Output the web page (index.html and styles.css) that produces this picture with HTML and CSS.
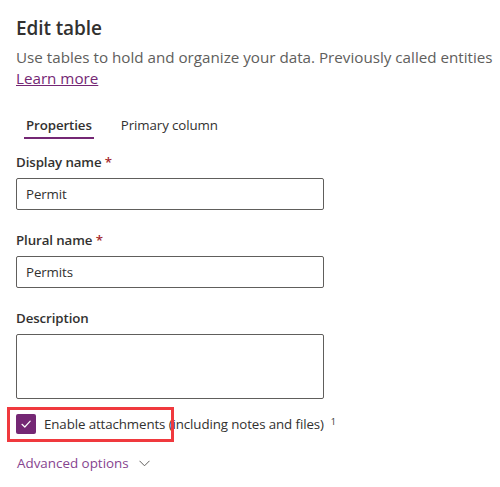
FILE: index.html
```html
<!DOCTYPE html>
<html>
<head>
<meta charset="utf-8">
<link rel="stylesheet" href="styles.css">
</head>
<body>
<div class="panel">
  <h1 class="title">Edit table</h1>
  <p class="subtitle">Use tables to hold and organize your data. Previously called entities</p>
  <a class="learn" href="#">Learn more</a>

  <div class="tabs">
    <div class="tab active">Properties</div>
    <div class="tab">Primary column</div>
  </div>

  <div class="field">
    <label class="label">Display name <span class="req">*</span></label>
    <div class="input">Permit</div>
  </div>
  <div class="field">
    <label class="label">Plural name <span class="req">*</span></label>
    <div class="input">Permits</div>
  </div>
  <div class="field">
    <label class="label">Description</label>
    <div class="textarea"></div>
  </div>

  <div class="check-row">
    <span class="checkbox">
      <svg width="12" height="12" viewBox="0 0 12 12"><path d="M2 6.3 L4.8 9 L10.2 3.2" fill="none" stroke="#fff" stroke-width="1.2" stroke-linecap="round" stroke-linejoin="round"/></svg>
    </span>
    <span class="check-label">Enable attachments (including notes and files)</span>
    <sup class="sup">1</sup>
    <span class="highlight"></span>
  </div>

  <div class="advanced">Advanced options
    <svg class="chev" width="11" height="7" viewBox="0 0 11 7"><path d="M0.5 0.8 L5.5 5.8 L10.5 0.8" fill="none" stroke="#605e5c" stroke-width="1"/></svg>
  </div>
</div>
</body>
</html>
```

FILE: styles.css
```css
* { box-sizing: border-box; }
html, body { margin: 0; padding: 0; background: #fff; }
body {
  font-family: "Open Sans", "Noto Sans", "Liberation Sans", sans-serif;
  color: #323130;
  width: 500px;
  height: 487px;
  overflow: hidden;
}
.panel {
  padding: 15px 0 0 16px;
  display: flex;
  flex-direction: column;
  align-items: flex-start;
}
.title {
  margin: 0;
  font-size: 19px;
  font-weight: 600;
  line-height: 26px;
  color: #323130;
  letter-spacing: -0.1px;
}
.subtitle {
  margin: 6px 0 0 0;
  font-size: 15.2px;
  line-height: 21px;
  color: #605e5c;
  white-space: nowrap;
}
.learn {
  font-size: 15.2px;
  line-height: 20px;
  color: #742774;
  text-decoration: underline;
}
.tabs {
  display: flex;
  gap: 25px;
  margin-top: 27px;
  margin-left: 8px;
}
.tab {
  font-size: 13.3px;
  line-height: 20px;
  padding: 0 2px 2px;
  border-bottom: 2px solid transparent;
  color: #323130;
  letter-spacing: -0.1px;
}
.tab.active {
  font-weight: 600;
  border-bottom-color: #742774;
}
.field {
  display: flex;
  flex-direction: column;
  margin-top: 13px;
}
.field + .field { margin-top: 20px; }
.label {
  font-size: 13.3px;
  font-weight: 600;
  line-height: 20px;
  color: #323130;
  letter-spacing: -0.1px;
}
.req { color: #a4262c; }
.input {
  margin-top: 6px;
  width: 308px;
  height: 32px;
  border: 1px solid #605e5c;
  border-radius: 2px;
  padding: 0 9px;
  font-size: 13.3px;
  line-height: 30px;
  color: #323130;
  letter-spacing: -0.1px;
}
.textarea {
  margin-top: 6px;
  width: 308px;
  height: 65px;
  border: 1px solid #605e5c;
  border-radius: 2px;
}
.check-row {
  position: relative;
  display: flex;
  align-items: center;
  margin-top: 15px;
  height: 20px;
}
.checkbox {
  width: 20px;
  height: 20px;
  border-radius: 2px;
  background: #742774;
  display: flex;
  align-items: center;
  justify-content: center;
}
.check-label {
  margin-left: 8px;
  font-size: 13.3px;
  line-height: 20px;
  color: #323130;
  letter-spacing: -0.1px;
}
.sup {
  font-size: 9px;
  margin-left: 7px;
  align-self: flex-start;
  line-height: 10px;
  margin-top: 3px;
}
.highlight {
  position: absolute;
  left: -9px;
  top: -7px;
  width: 167px;
  height: 35px;
  border: 3px solid #f0393e;
}
.advanced {
  margin-top: 19px;
  margin-left: 1px;
  font-size: 13.4px;
  line-height: 20px;
  color: #86448f;
  display: flex;
  align-items: center;
  gap: 10px;
}
.chev { margin-top: 1px; }
```
